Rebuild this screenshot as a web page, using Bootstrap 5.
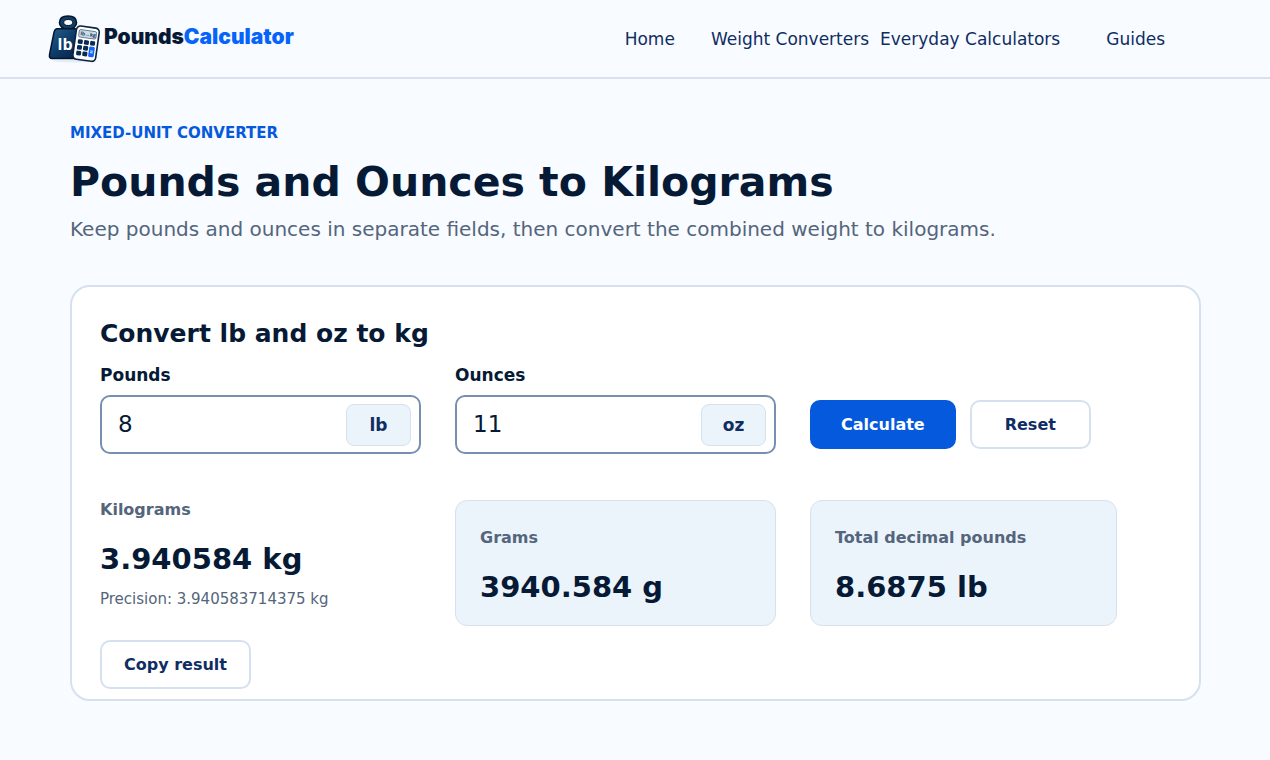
<!DOCTYPE html>
<html lang="en">
<head>
<meta charset="utf-8">
<meta name="viewport" content="width=device-width, initial-scale=1">
<title>Pounds and Ounces to Kilograms | PoundsCalculator</title>
<link href="https://cdn.jsdelivr.net/npm/bootstrap@5.3.0/dist/css/bootstrap.min.css" rel="stylesheet">
<style>
  :root { --ink: #061a36; --navy: #0f2d63; --blue: #0559dc; --muted: #54657c; --line: #d6e1f0; --tint: #ecf4fb; }
  body { font-family: "DejaVu Sans", sans-serif; background: #f8fbff; color: var(--ink); font-size: 16px; line-height: 20px; }
  .site-header { border-bottom: 2px solid #d9e0f0; padding: 14px 105px 13px 48px; }
  .brand { gap: 2px; color: var(--ink); font: 900 21px/28px Inter, sans-serif; }
  .brand-name { padding-bottom: 4px; }
  .brand-name span { color: #0664fb; }
  .site-nav { column-gap: 11px; font-size: 17px; }
  .site-nav a { color: var(--navy); text-decoration: none; }
  .site-nav .nav-first { margin-right: 25px; }
  .site-nav .nav-last { margin-left: 35px; }
  .page { padding: 44px 69px 44px 70px; }
  .eyebrow { color: var(--blue); font-size: 15px; font-weight: 700; margin-bottom: 14px; }
  h1 { font-size: 41px; line-height: 50px; font-weight: 700; margin-bottom: 7px; }
  .intro { color: var(--muted); font-size: 20px; line-height: 30px; margin-bottom: 41px; }
  .panel { background: #fff; border: 2px solid var(--line); border-radius: 20px; padding: 32px 28px 10px; }
  h2 { font-size: 25px; line-height: 30px; font-weight: 700; margin-bottom: 16px; }
  .cols { display: grid; grid-template-columns: 321fr 321fr 361fr; column-gap: 34px; }
  .cols + .cols { margin-top: 46px; }
  .field-label { font-size: 17px; font-weight: 700; margin-bottom: 10px; }
  .field { border: 2px solid #7890b0; border-radius: 10px; padding: 7px 8px 6px 16px; }
  .field:focus-within { border-color: var(--blue); }
  .field .form-control { background: none; border: 0; box-shadow: none; padding: 0 0 2px; color: var(--ink); font-size: 23px; line-height: 30px; }
  .unit { background: var(--tint); border: 1px solid var(--line); border-radius: 8px; width: 65px; height: 42px; color: var(--navy); font-size: 17px; font-weight: 700; }
  .actions { gap: 14px; margin-bottom: 5px; }
  .btn { --bs-btn-font-size: 16px; --bs-btn-font-weight: 700; --bs-btn-line-height: 21px; --bs-btn-border-width: 2px; --bs-btn-border-radius: 10px; --bs-btn-padding-y: 12px; --bs-btn-padding-x: 22px; }
  .btn-calc { --bs-btn-color: #fff; --bs-btn-bg: var(--blue); --bs-btn-border-color: var(--blue); --bs-btn-hover-color: #fff; --bs-btn-hover-bg: #044bbb; --bs-btn-padding-x: 29px; }
  .btn-plain { --bs-btn-color: var(--navy); --bs-btn-bg: #fff; --bs-btn-border-color: var(--line); --bs-btn-hover-color: var(--navy); --bs-btn-hover-bg: var(--tint); --bs-btn-hover-border-color: var(--line); }
  .btn-reset { --bs-btn-padding-x: 33px; }
  .result-label { color: var(--muted); font-weight: 700; margin-bottom: 21px; }
  .result-value { font-size: 29px; line-height: 36px; font-weight: 700; }
  .precision { color: var(--muted); font-size: 15px; margin: 12px 0 31px; }
  .tile { background: var(--tint); border: 1px solid var(--line); border-radius: 12px; padding: 27px 24px 20px; }
  .tile-short { width: 85%; }
</style>
</head>
<body>
<header class="site-header d-flex flex-wrap align-items-center justify-content-between">
  <a class="brand d-flex align-items-center text-decoration-none" href="#">
    <svg width="54" height="50" viewBox="48 13 54 50" aria-hidden="true">
      <defs>
        <linearGradient id="iron" x1="0" y1="0" x2="1" y2="1"><stop offset="0" stop-color="#2a6290"/><stop offset=".5" stop-color="#0d3b68"/><stop offset="1" stop-color="#062044"/></linearGradient>
      </defs>
      <ellipse cx="75" cy="60" rx="23" ry="1.500" fill="#e4edf6"/>
      <path d="M63 30 63.500 27.500Q59.500 25 59.500 21.500C59.500 17 63 15 68 15S76.500 17 76.500 21.500Q76.500 25 72.500 27.500L73 30Z" fill="#133d63" stroke="#04162f" stroke-width="1.500"/>
      <ellipse cx="68.200" cy="21.500" rx="4.400" ry="3" fill="#f8fbff" stroke="#04162f" stroke-width="1"/>
      <path d="M57.500 27.800H75Q77 28 77.500 30L80 57.500H52Q49 57.500 49.500 53.500L54 31.500Q54.800 27.800 57.500 27.800Z" fill="url(#iron)" stroke="#04162f" stroke-width="1.500"/>
      <text x="57.500" y="48.500" font-family="Open Sans, sans-serif" font-size="16" font-weight="700" fill="#fff">lb</text>
      <g transform="translate(77 24.500) rotate(8)">
        <rect x="0" y="0" width="23" height="33.500" rx="4" fill="#fff" stroke="#0a2345" stroke-width="1.600"/>
        <rect x="3" y="3.500" width="17.500" height="7.500" rx="1.500" fill="#c9dcea" stroke="#526b82" stroke-width=".8"/>
        <text x="4.500" y="9" font-family="Open Sans, sans-serif" font-size="5" font-weight="700" fill="#1c3650">lb↔kg</text>
        <g fill="#0b2b55">
          <rect x="3" y="13.200" width="5" height="4.600" rx="1.200"/><rect x="9.200" y="13.200" width="5" height="4.600" rx="1.200"/><rect x="15.400" y="13.200" width="5" height="4.600" rx="1.200"/>
          <rect x="3" y="19" width="5" height="4.600" rx="1.200"/><rect x="9.200" y="19" width="5" height="4.600" rx="1.200"/>
          <rect x="3" y="24.800" width="5" height="4.600" rx="1.200"/><rect x="9.200" y="24.800" width="5" height="4.600" rx="1.200"/>
        </g>
        <rect x="15.200" y="19" width="5.600" height="10.400" rx="1.200" fill="#1267f5"/>
        <path d="M16.700 23.300H19.300M16.700 25H19.300" stroke="#fff" stroke-width=".8"/>
      </g>
    </svg>
    <span class="brand-name">Pounds<span>Calculator</span></span>
  </a>
  <nav class="site-nav d-flex flex-wrap" aria-label="Main">
    <a class="nav-first" href="#">Home</a>
    <a href="#">Weight Converters</a>
    <a href="#">Everyday Calculators</a>
    <a class="nav-last" href="#">Guides</a>
  </nav>
</header>

<main class="page container-fluid">
  <p class="eyebrow text-uppercase">Mixed-unit converter</p>
  <h1>Pounds and Ounces to Kilograms</h1>
  <p class="intro">Keep pounds and ounces in separate fields, then convert the combined weight to kilograms.</p>

  <section class="panel" aria-labelledby="converter-title">
    <h2 id="converter-title">Convert lb and oz to kg</h2>
    <form class="cols">
      <div>
        <label class="field-label d-block" for="pounds">Pounds</label>
        <div class="field d-flex align-items-center">
          <input class="form-control" id="pounds" type="text" inputmode="decimal" value="8">
          <span class="unit d-flex flex-shrink-0 align-items-center justify-content-center">lb</span>
        </div>
      </div>
      <div>
        <label class="field-label d-block" for="ounces">Ounces</label>
        <div class="field d-flex align-items-center">
          <input class="form-control" id="ounces" type="text" inputmode="decimal" value="11">
          <span class="unit d-flex flex-shrink-0 align-items-center justify-content-center">oz</span>
        </div>
      </div>
      <div class="actions d-flex align-self-end">
        <button class="btn btn-calc" type="button">Calculate</button>
        <button class="btn btn-plain btn-reset" type="reset">Reset</button>
      </div>
    </form>
    <div class="cols align-items-start">
      <div>
        <div class="result-label">Kilograms</div>
        <div class="result-value">3.940584 kg</div>
        <p class="precision">Precision: 3.940583714375 kg</p>
        <button class="btn btn-plain" type="button">Copy result</button>
      </div>
      <div class="tile">
        <div class="result-label">Grams</div>
        <div class="result-value">3940.584 g</div>
      </div>
      <div class="tile tile-short">
        <div class="result-label">Total decimal pounds</div>
        <div class="result-value">8.6875 lb</div>
      </div>
    </div>
  </section>
</main>
<script src="https://cdn.jsdelivr.net/npm/bootstrap@5.3.0/dist/js/bootstrap.bundle.min.js"></script>
</body>
</html>
